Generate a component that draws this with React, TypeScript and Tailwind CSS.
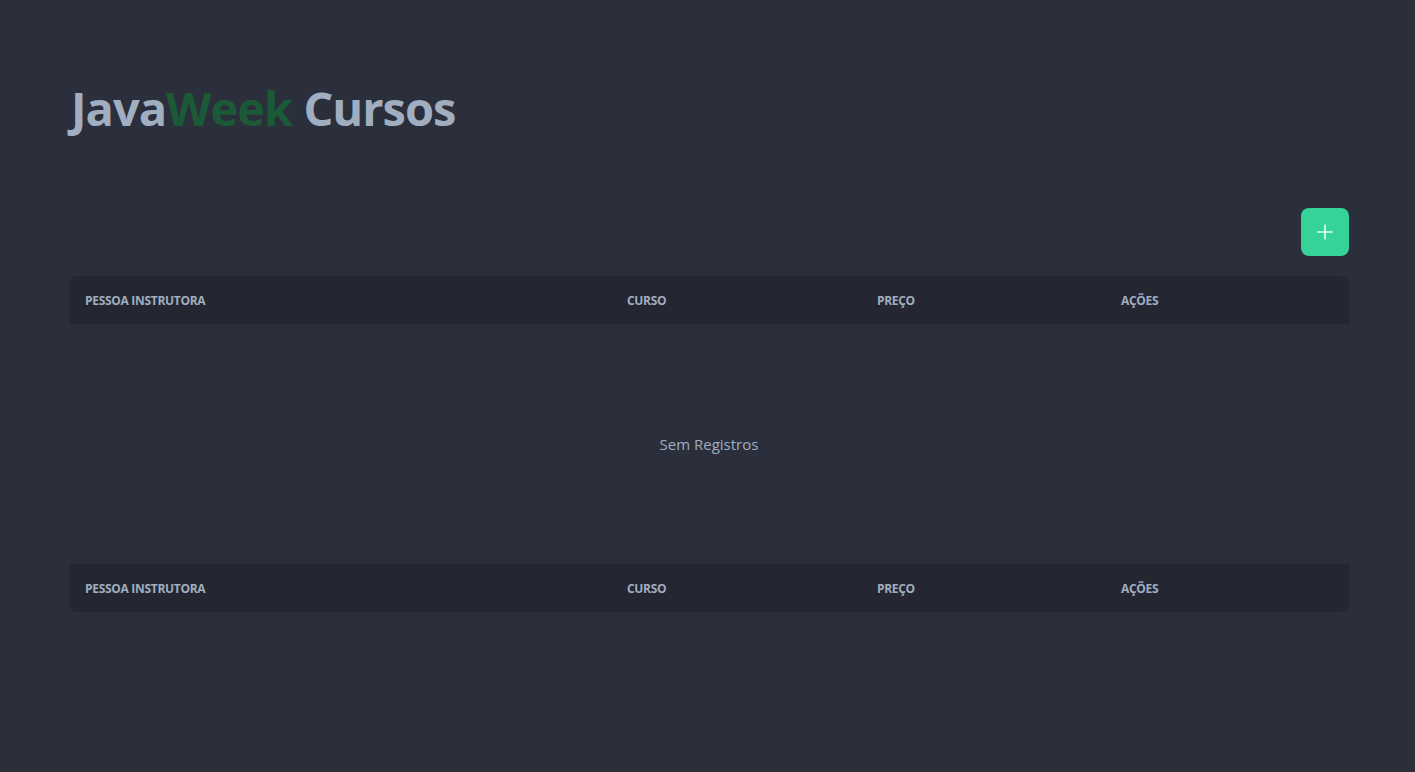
import React from "react";
import { Plus } from "lucide-react";

const columns = ["Pessoa Instrutora", "Curso", "Preço", "Ações"];

const HeaderRow = ({ className }: { className: string }) => (
  <div className={`grid h-12 grid-cols-[542px_250px_244px_244px] items-center bg-[#242731] pt-px ${className}`}>
    {columns.map((col) => (
      <div key={col} className="px-4 text-[12px] font-bold uppercase tracking-tight text-[#a0aec0]">
        {col}
      </div>
    ))}
  </div>
);

export default function App() {
  return (
    <div className="min-h-screen bg-[#2a2f3b] font-['Open_Sans','Noto_Sans',sans-serif]">
      <div className="ml-[69px] w-[1280px] pt-[76px]">
        <h1 className="pl-[2px] text-[47px] font-bold leading-[64px] tracking-[-1px] text-[#a0aec0]">
          Java<span className="text-[#1c5a37]">Week</span> Cursos
        </h1>
        <div className="mt-[68px] flex justify-end">
          <button className="flex size-12 items-center justify-center rounded-lg bg-[#36d399] text-[#e6fff4]">
            <Plus size={24} strokeWidth={1.6} />
          </button>
        </div>
        <div className="mt-5">
          <HeaderRow className="rounded-t-lg" />
          <div className="flex h-[240px] items-center justify-center text-[15px] text-[#a0aec0]">
            Sem Registros
          </div>
          <HeaderRow className="rounded-b-lg" />
        </div>
      </div>
    </div>
  );
}
